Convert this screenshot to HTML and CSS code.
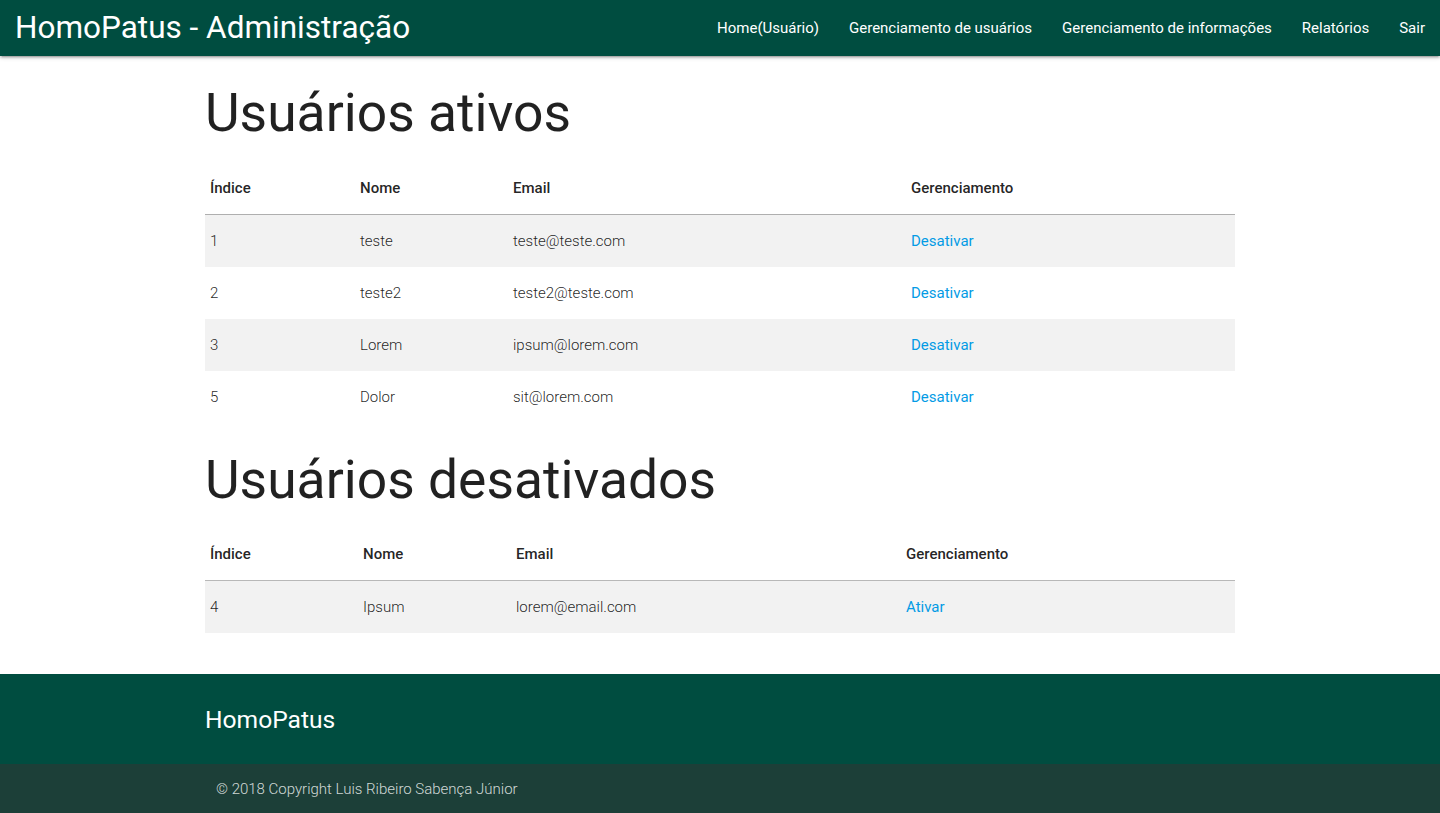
FILE: index.html
```html
<!DOCTYPE html>
<html lang="pt-BR">
<head>
<meta charset="utf-8">
<title>HomoPatus - Administração</title>
<link rel="stylesheet" href="styles.css">
</head>
<body>
<nav class="nav">
  <a class="brand" href="#">HomoPatus - Administração</a>
  <ul class="nav-links">
    <li><a href="#">Home(Usuário)</a></li>
    <li><a href="#">Gerenciamento de usuários</a></li>
    <li><a href="#">Gerenciamento de informações</a></li>
    <li><a href="#">Relatórios</a></li>
    <li><a href="#">Sair</a></li>
  </ul>
</nav>
<main class="container">
  <h2 class="title">Usuários ativos</h2>
  <table class="striped">
    <colgroup>
      <col class="c1a"><col class="c2a"><col class="c3a"><col>
    </colgroup>
    <thead>
      <tr><th>Índice</th><th>Nome</th><th>Email</th><th>Gerenciamento</th></tr>
    </thead>
    <tbody>
      <tr><td>1</td><td>teste</td><td>teste@teste.com</td><td><a href="#">Desativar</a></td></tr>
      <tr><td>2</td><td>teste2</td><td>teste2@teste.com</td><td><a href="#">Desativar</a></td></tr>
      <tr><td>3</td><td>Lorem</td><td>ipsum@lorem.com</td><td><a href="#">Desativar</a></td></tr>
      <tr><td>5</td><td>Dolor</td><td>sit@lorem.com</td><td><a href="#">Desativar</a></td></tr>
    </tbody>
  </table>
  <h2 class="title">Usuários desativados</h2>
  <table class="striped">
    <colgroup>
      <col class="c1b"><col class="c2b"><col class="c3b"><col>
    </colgroup>
    <thead>
      <tr><th>Índice</th><th>Nome</th><th>Email</th><th>Gerenciamento</th></tr>
    </thead>
    <tbody>
      <tr><td>4</td><td>Ipsum</td><td>lorem@email.com</td><td><a href="#">Ativar</a></td></tr>
    </tbody>
  </table>
</main>
<footer class="footer">
  <div class="footer-main">
    <h5 class="footer-title">HomoPatus</h5>
  </div>
  <div class="footer-copyright">
    <span>© 2018 Copyright Luis Ribeiro Sabença Júnior</span>
  </div>
</footer>
</body>
</html>
```
FILE: styles.css
```css
html, body {
  margin: 0;
  padding: 0;
}
body {
  font-family: Roboto, "Liberation Sans", Arial, sans-serif;
  font-size: 15px;
  color: rgba(0, 0, 0, 0.87);
  background: #fff;
}
a { text-decoration: none; }

.nav {
  height: 56px;
  background: #004d40;
  display: flex;
  align-items: center;
  justify-content: space-between;
  box-shadow: 0 2px 2px 0 rgba(0,0,0,0.14), 0 3px 1px -2px rgba(0,0,0,0.12), 0 1px 5px 0 rgba(0,0,0,0.2);
  position: relative;
  z-index: 2;
}
.brand {
  color: #fff;
  font-size: 31.5px;
  padding-left: 15px;
  line-height: 56px;
}
.nav-links {
  list-style: none;
  margin: 0;
  padding: 0;
  display: flex;
}
.nav-links a {
  display: block;
  color: #fff;
  font-size: 15px;
  padding: 0 15px;
  line-height: 56px;
}

.container {
  width: 1030px;
  margin: 0 auto;
  padding-bottom: 41px;
}
.title {
  font-size: 53.4px;
  font-weight: 400;
  line-height: 1.1;
  margin: 28px 0 19px;
}

table {
  width: 100%;
  border-collapse: collapse;
  border-spacing: 0;
}
.c1a { width: 150px; }
.c2a { width: 153px; }
.c3a { width: 398px; }
.c1b { width: 153px; }
.c2b { width: 153px; }
.c3b { width: 390px; }
thead tr {
  border-bottom: 1px solid rgba(0, 0, 0, 0.15);
}
th, td {
  padding: 15px 5px;
  text-align: left;
  line-height: 22px;
  font-size: 15px;
}
th {
  font-weight: 500;
}
td {
  font-weight: 300;
}
.striped tbody tr:nth-child(odd) {
  background: #f2f2f2;
}
td a {
  color: #039be5;
  font-weight: 400;
}

.footer-main {
  background: #004d40;
  height: 90px;
  display: flex;
  align-items: center;
}
.footer-title {
  width: 1030px;
  margin: 0 auto;
  color: #fff;
  font-size: 24.6px;
  font-weight: 400;
}
.footer-copyright {
  background: #1c3f38;
  height: 50px;
  display: flex;
  align-items: center;
}
.footer-copyright span {
  width: 1008px;
  margin: 0 auto;
  color: rgba(255, 255, 255, 0.8);
  font-size: 15px;
  font-weight: 300;
}
```
